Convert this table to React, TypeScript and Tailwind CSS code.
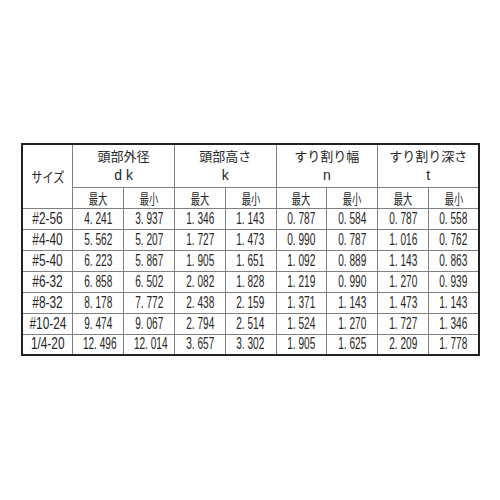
import React from "react";

const rows = [
  ["#2-56", "4. 241", "3. 937", "1. 346", "1. 143", "0. 787", "0. 584", "0. 787", "0. 558"],
  ["#4-40", "5. 562", "5. 207", "1. 727", "1. 473", "0. 990", "0. 787", "1. 016", "0. 762"],
  ["#5-40", "6. 223", "5. 867", "1. 905", "1. 651", "1. 092", "0. 889", "1. 143", "0. 863"],
  ["#6-32", "6. 858", "6. 502", "2. 082", "1. 828", "1. 219", "0. 990", "1. 270", "0. 939"],
  ["#8-32", "8. 178", "7. 772", "2. 438", "2. 159", "1. 371", "1. 143", "1. 473", "1. 143"],
  ["#10-24", "9. 474", "9. 067", "2. 794", "2. 514", "1. 524", "1. 270", "1. 727", "1. 346"],
  ["1/4-20", "12. 496", "12. 014", "3. 657", "3. 302", "1. 905", "1. 625", "2. 209", "1. 778"],
];

const groups = [
  { title: "頭部外径", sym: "d k" },
  { title: "頭部高さ", sym: "k" },
  { title: "すり割り幅", sym: "n" },
  { title: "すり割り深さ", sym: "t" },
];

const cell = "border border-[#808080] text-center align-middle p-0 font-normal";

// narrow, tall digits like the original spec sheet
function Num({ v, label }: { v: string; label?: boolean }) {
  return (
    <span
      className={`inline-block whitespace-nowrap text-[16px] leading-none [font-family:'Liberation_Sans',sans-serif] ${
        label ? "scale-x-[0.74]" : "scale-x-[0.63]"
      }`}
    >
      {v}
    </span>
  );
}

export default function App() {
  return (
    <div className="w-[500px] h-[500px] bg-white pt-[143px] pl-[21px] text-[#262626] [font-family:'Noto_Sans_CJK_JP',sans-serif]">
      <table className="border-collapse border-2 border-[#222] table-fixed w-[457px] text-[13px] leading-none">
        <colgroup>
          {Array.from({ length: 9 }).map((_, i) => (
            <col key={i} className="w-[50.8px]" />
          ))}
        </colgroup>
        <thead>
          <tr className="h-[43px]">
            <th rowSpan={2} className={cell}>
              <span className="inline-block text-[14px] scale-x-[0.8]">サイズ</span>
            </th>
            {groups.map((g) => (
              <th key={g.title} colSpan={2} className={cell}>
                <div className="flex flex-col items-center gap-[6px]">
                  <span>{g.title}</span>
                  <span className="[font-family:'Liberation_Sans',sans-serif] text-[14px]">{g.sym}</span>
                </div>
              </th>
            ))}
          </tr>
          <tr className="h-[21px]">
            {groups.map((g) => (
              <React.Fragment key={g.title}>
                <th className={cell}>
                  <span className="inline-block text-[14px] scale-x-[0.66]">最大</span>
                </th>
                <th className={cell}>
                  <span className="inline-block text-[14px] scale-x-[0.66]">最小</span>
                </th>
              </React.Fragment>
            ))}
          </tr>
        </thead>
        <tbody>
          {rows.map((r) => (
            <tr key={r[0]} className="h-[21px]">
              {r.map((v, i) => (
                <td key={i} className={cell}>
                  <Num v={v} label={i === 0} />
                </td>
              ))}
            </tr>
          ))}
        </tbody>
      </table>
    </div>
  );
}
